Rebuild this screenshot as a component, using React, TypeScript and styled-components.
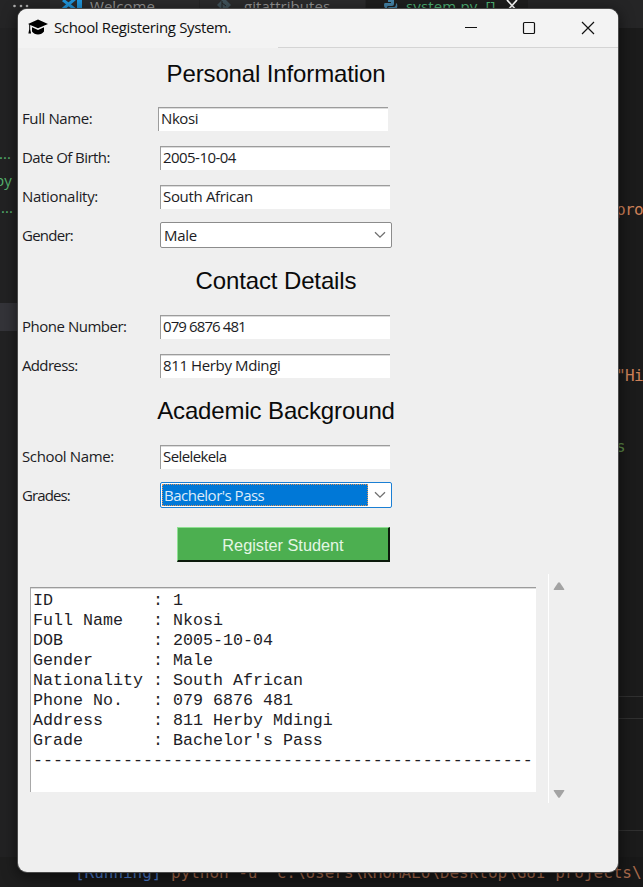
import React from "react";
import styled, { createGlobalStyle, css } from "styled-components";

const GlobalStyle = createGlobalStyle`
  * { box-sizing: border-box; }
  body { margin: 0; background: #1e1e1e; overflow: hidden; }
`;

const ui = css`
  font-family: "Open Sans", "Noto Sans", sans-serif;
  font-size: 15px;
  line-height: 20px;
  white-space: pre;
`;

const Desktop = styled.div`
  position: relative;
  width: 643px;
  height: 887px;
  overflow: hidden;
  background: #1e1e1e;
`;

/* ---------- editor behind the dialog ---------- */
const Editor = styled.div`
  display: grid;
  grid-template-columns: 18px 1fr 26px;
  grid-template-rows: 28px 1fr 30px;
  height: 100%;
`;
const TabStrip = styled.div`
  ${ui};
  grid-column: 1 / -1;
  display: flex;
  background: #252526;
  line-height: 13px;
  color: #969696;
`;
const Tab = styled.div<{ $width: number; $pad: number; $active?: boolean }>`
  display: flex;
  flex: none;
  width: ${(p) => p.$width}px;
  padding-left: ${(p) => p.$pad}px;
  background: ${(p) => (p.$active ? "#1e1e1e" : "#2b2b2c")};
  border-right: 1px solid #252526;
  color: ${(p) => (p.$active ? "#4fb477" : "#969696")};
  letter-spacing: ${(p) => (p.$active ? 0.15 : 0.05)}px;
  svg { flex: none; margin-right: 8px; }
`;
const TabMore = styled.div`
  width: 50px;
  padding-left: 12px;
  svg { display: block; }
`;
const TabClose = styled.svg`
  margin-left: 10px;
`;
const Explorer = styled.div`
  ${ui};
  background: #222223;
  color: #56b46f;
  padding-top: 115px;
  overflow: hidden;
`;
const FileLine = styled.div<{ $shift?: number }>`
  height: 27px;
  text-indent: ${(p) => p.$shift ?? 0}px;
`;
const SelectedFile = styled.div`
  height: 28px;
  margin-top: 79px;
  background: #343439;
`;
const CodeEdge = styled.div`
  grid-column: 3;
  padding-top: 172px;
  background: #1b1b1b;
  font: 16px/20px "DejaVu Sans Mono", monospace;
  white-space: pre;
  overflow: hidden;
`;
const CodeLine = styled.div<{ $gap?: number; $comment?: boolean }>`
  height: 20px;
  margin-top: ${(p) => p.$gap ?? 0}px;
  margin-left: -1px;
  letter-spacing: -0.6px;
  color: ${(p) => (p.$comment ? "#5b8a48" : "#ce8159")};
`;
const PanelRule = styled.div<{ $gap: number }>`
  height: 1px;
  margin-top: ${(p) => p.$gap}px;
  background: #303030;
`;
const Terminal = styled.div`
  grid-column: 1 / -1;
  display: flex;
  align-items: flex-start;
  padding: 6px 0 0 25px;
  margin-left: 50px;
  background: #181818;
  color: #a86a4c;
  font: 16px/20px "DejaVu Sans Mono", monospace;
  letter-spacing: -0.03px;
  white-space: pre;
  overflow: hidden;
`;
const Running = styled.span`
  color: #4a78c8;
`;

/* ---------- dialog ---------- */
const Window = styled.div`
  position: absolute;
  left: 18px;
  top: 9px;
  width: 600px;
  height: 863px;
  display: flex;
  flex-direction: column;
  background: #efefef;
  border-radius: 9px;
  box-shadow: 0 0 0 1px #4a4a4a, 0 3px 14px 2px rgba(0, 0, 0, 0.5);
  overflow: hidden;
`;
const TitleBar = styled.div`
  display: flex;
  height: 39px;
  flex: none;
  background: linear-gradient(#d4d4d4, #d4d4d4) 260px 38px / 340px 1px no-repeat, #f3f3f3;
  padding-left: 10px;
`;
const Title = styled.div`
  ${ui};
  flex: 1;
  margin: 8px 0 0 6px;
  letter-spacing: -0.36px;
  color: #111;
`;
const Cap = styled.svg`
  flex: none;
  margin-top: 10px;
`;
const Controls = styled.svg`
  flex: none;
`;
const Form = styled.div`
  width: 516px;
`;
const Heading = styled.h2<{ $height: number }>`
  height: ${(p) => p.$height}px;
  margin: 0;
  padding-top: 13px;
  text-align: center;
  font: 400 24px/26px "Liberation Sans", Arial, sans-serif;
  letter-spacing: -0.13px;
  color: #0a0a0a;
`;
const Row = styled.div`
  display: grid;
  grid-template-columns: 138px 1fr;
  height: 39px;
  padding-left: 4px;
`;
const Label = styled.label<{ $spacing: number }>`
  ${ui};
  margin-top: 9px;
  letter-spacing: ${(p) => p.$spacing}px;
  color: #1c1c24;
`;
const Entry = styled.div<{ $spacing: number; $shift?: number }>`
  ${ui};
  width: 230px;
  height: 24px;
  margin: 8px 0 0 ${(p) => p.$shift ?? 0}px;
  padding-left: 2px;
  border-top: 1px solid #9c9c9c;
  border-left: 1px solid #9c9c9c;
  box-shadow: inset 0 1px #dcdcdc;
  background: #fff;
  letter-spacing: ${(p) => p.$spacing}px;
  color: #1c1c24;
`;
const Combo = styled.div<{ $focused?: boolean }>`
  display: flex;
  align-items: center;
  justify-content: space-between;
  width: 232px;
  height: 26px;
  margin-top: 6px;
  padding: 0 5px 0 1px;
  border: 1px solid ${(p) => (p.$focused ? "#1b7fd4" : "#8c8c8c")};
  border-radius: 2px;
  background: #fff;
`;
const ComboValue = styled.div<{ $spacing: number; $selected?: boolean }>`
  ${ui};
  width: 206px;
  height: 22px;
  padding-left: 1px;
  border: 1px dotted ${(p) => (p.$selected ? "#d8935a" : "transparent")};
  background: ${(p) => (p.$selected ? "#0078d7" : "#fff")};
  color: ${(p) => (p.$selected ? "#dcebfa" : "#1c1c24")};
  letter-spacing: ${(p) => p.$spacing}px;
`;
const Register = styled.button`
  display: block;
  width: 213px;
  height: 35px;
  margin: 12px 0 0 159px;
  padding: 1px 0 0;
  border-style: solid;
  border-width: 1px 2px 2px 1px;
  border-color: #8fe092 #0c1a0c #0c1a0c #8fe092;
  background: #4caf50;
  color: #e4f6e4;
  font: 16.3px/20px "Liberation Sans", Arial, sans-serif;
`;
const Results = styled.div`
  display: flex;
  margin: 12px 0 0 12px;
`;
const Output = styled.pre`
  width: 506px;
  height: 205px;
  margin: 13px 0 0;
  padding: 3px 0 0 2px;
  border-top: 1px solid #9c9c9c;
  border-left: 1px solid #a8a8a8;
  box-shadow: inset 0 1px #dcdcdc;
  background: #fff;
  color: #1e1e26;
  font: 16.67px/20px "Liberation Mono", "Courier New", monospace;
`;
const ScrollBar = styled.div`
  display: flex;
  flex-direction: column;
  justify-content: space-between;
  height: 229px;
  margin-left: 12px;
  padding: 7px 0 4px 4px;
  border-left: 1px solid #fff;
`;

const Chevron = () => (
  <svg width="12" height="8" viewBox="0 0 12 8" fill="none" stroke="#707070" strokeWidth="1.3">
    <path d="M1 1.2 6 6.2 11 1.2" />
  </svg>
);

const Arrow = ({ down }: { down?: boolean }) => (
  <svg width="12" height="10" viewBox="0 0 12 10" fill="#a3a3a3">
    <path d={down ? "M1.2 1h9.6q.9.2.4 1.1L7 8.2q-1 1.2-2 0L.8 2.1Q.3 1.2 1.2 1Z" : "M1.2 9h9.6q.9-.2.4-1.1L7 1.8q-1-1.2-2 0L.8 7.9Q.3 8.8 1.2 9Z"} />
  </svg>
);

const record: [string, string][] = [
  ["ID", "1"],
  ["Full Name", "Nkosi"],
  ["DOB", "2005-10-04"],
  ["Gender", "Male"],
  ["Nationality", "South African"],
  ["Phone No.", "079 6876 481"],
  ["Address", "811 Herby Mdingi"],
  ["Grade", "Bachelor's Pass"],
];
const report =
  record.map(([name, value]) => `${name.padEnd(12)}: ${value}`).join("\n") + "\n" + "-".repeat(50);

interface FieldProps {
  label: string;
  value: string;
  labelSpacing: number;
  valueSpacing: number;
  shift?: number;
}
const Field = ({ label, value, labelSpacing, valueSpacing, shift }: FieldProps) => (
  <Row>
    <Label $spacing={labelSpacing}>{label}</Label>
    <Entry $spacing={valueSpacing} $shift={shift}>{value}</Entry>
  </Row>
);

const Select = ({ label, value, labelSpacing, valueSpacing, focused }: FieldProps & { focused?: boolean }) => (
  <Row>
    <Label $spacing={labelSpacing}>{label}</Label>
    <Combo $focused={focused}>
      <ComboValue $spacing={valueSpacing} $selected={focused}>{value}</ComboValue>
      <Chevron />
    </Combo>
  </Row>
);

export default function App() {
  return (
    <Desktop>
      <GlobalStyle />
      <Editor>
        <TabStrip>
          <TabMore>
            <svg width="20" height="9" fill="#b0b0b0">
              <circle cx="2.5" cy="6" r="1.3" /><circle cx="9" cy="6" r="1.3" /><circle cx="15" cy="6" r="1.3" />
            </svg>
          </TabMore>
          <Tab $width={150} $pad={12}>
            <svg width="20" height="12" fill="none" stroke="#2196dc" strokeWidth="3">
              <path d="M1 9 14-2M1 0l14 11" /><path d="M17.5 0v12" strokeWidth="5" />
            </svg>
            Welcome
          </Tab>
          <Tab $width={166} $pad={16}>
            <svg width="16" height="14">
              <path d="M8-2 15 5 8 12 1 5Z" fill="#41535b" /><path d="M6 1v7M6 3l4 3" stroke="#222" fill="none" />
            </svg>
            .gitattributes
          </Tab>
          <Tab $width={163} $pad={18} $active>
            <svg width="14" height="14" fill="#4584a8">
              <path d="M4 0h6v4q0 2-2 2H4Q3 6 3 8H1Q0 7 0 5t1-2h6V2H4Z" />
              <path d="M12 3q2 1 1 5l-1 1H7v1h3q0 3-4 3-3 0-3-3 0-3 3-3h4q2 0 2-4Z" />
            </svg>
            system.py  []
            <TabClose width="12" height="12" fill="none" stroke="#fff" strokeWidth="1.7">
              <path d="m1 0 10 11M11 0 1 11" />
            </TabClose>
          </Tab>
        </TabStrip>
        <Explorer>
          <FileLine $shift={-1}>...</FileLine>
          <FileLine $shift={-5}>py</FileLine>
          <FileLine $shift={1}>...</FileLine>
          <SelectedFile />
        </Explorer>
        <CodeEdge>
          <CodeLine>pro</CodeLine>
          <CodeLine $gap={146}>"Hi</CodeLine>
          <CodeLine $gap={51} $comment>s</CodeLine>
          <PanelRule $gap={239} />
          <PanelRule $gap={21} />
          <PanelRule $gap={111} />
        </CodeEdge>
        <Terminal>
          <Running>[Running]</Running> python -u "c:\Users\KHOMALO\Desktop\GUI projects\
        </Terminal>
      </Editor>

      <Window>
        <TitleBar>
          <Cap width="20" height="17" viewBox="0 0 20 17" fill="#000">
            <path d="M10 .6 20 5 10 9.3 2.2 6v4.2l.9 4.3H.4l.8-4.3V5.5L0 5Z" />
            <path d="M4 8.2 10 11l6-2.8v4.3q-2.2 3-6 3t-6-3Z" />
          </Cap>
          <Title>School Registering System.</Title>
          <Controls width="160" height="38" fill="none" stroke="#111" strokeWidth="1.2">
            <path d="M7 18.5h12" />
            <rect x="65.5" y="13.5" width="11" height="11" rx="1" />
            <path d="m124 13 12 12m0-12-12 12" />
          </Controls>
        </TitleBar>
        <Form>
          <Heading $height={51}>Personal Information</Heading>
          <Field label="Full Name:" value="Nkosi" labelSpacing={-0.4} valueSpacing={-0.4} shift={-2} />
          <Field label="Date Of Birth:" value="2005-10-04" labelSpacing={-0.55} valueSpacing={-0.55} />
          <Field label="Nationality:" value="South African" labelSpacing={-0.31} valueSpacing={-0.33} />
          <Select label="Gender:" value="Male" labelSpacing={-0.75} valueSpacing={-0.3} />
          <Heading $height={52}>Contact Details</Heading>
          <Field label="Phone Number:" value="079 6876 481" labelSpacing={-0.48} valueSpacing={-0.9} />
          <Field label="Address:" value="811 Herby Mdingi" labelSpacing={-0.65} valueSpacing={-0.38} />
          <Heading $height={52}>Academic Background</Heading>
          <Field label="School Name:" value="Selelekela" labelSpacing={-0.36} valueSpacing={-0.6} />
          <Select label="Grades:" value="Bachelor's Pass" labelSpacing={-0.9} valueSpacing={-0.5} focused />
          <Register>Register Student</Register>
        </Form>
        <Results>
          <Output>{report}</Output>
          <ScrollBar>
            <Arrow />
            <Arrow down />
          </ScrollBar>
        </Results>
      </Window>
    </Desktop>
  );
}
